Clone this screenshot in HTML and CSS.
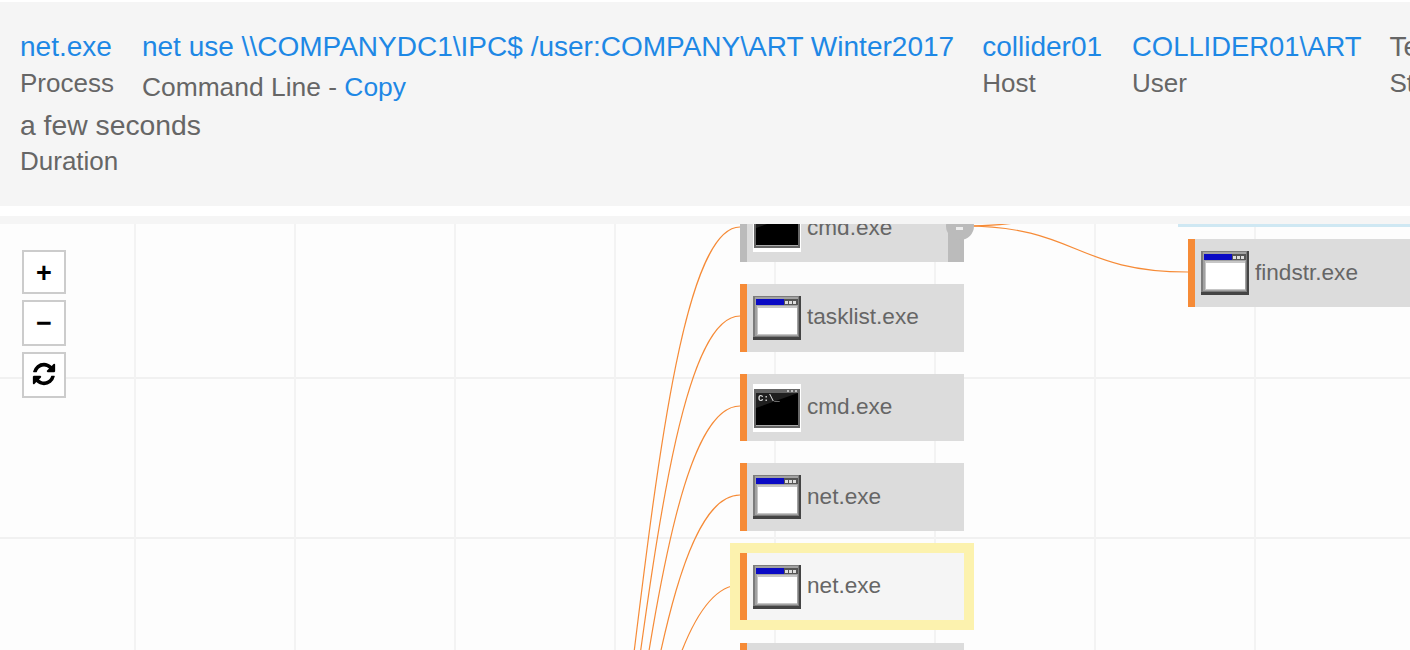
FILE: index.html
```html
<!DOCTYPE html>
<html lang="en">
<head>
    <meta charset="UTF-8">
    <title>Process Tree</title>
    <link rel="stylesheet" href="styles.css">
</head>
<body>
    <svg class="defs" width="0" height="0">
        <symbol id="icon-window" viewBox="0 0 48 48">
            <rect x="0" y="2" width="48" height="44" fill="#444"/>
            <rect x="0" y="2" width="46" height="41" fill="#7c7c7c"/>
            <rect x="2" y="3" width="43" height="39" fill="#a2a2a2"/>
            <rect x="3" y="5" width="42" height="6" fill="#0a0ac4"/>
            <rect x="31" y="5" width="14" height="6" fill="#555"/>
            <rect x="32" y="7" width="3" height="3" fill="#ddd"/>
            <rect x="36" y="7" width="3" height="3" fill="#ddd"/>
            <rect x="40" y="7" width="3" height="3" fill="#ddd"/>
            <rect x="4" y="12" width="40" height="29" fill="#c6c6c6"/>
            <rect x="5" y="14" width="39" height="26" fill="#fff"/>
        </symbol>
        <symbol id="icon-cmd" viewBox="0 0 48 48">
            <rect width="48" height="48" fill="#fff"/>
            <rect x="1" y="5" width="46" height="39" fill="#666"/>
            <rect x="3" y="9" width="42" height="32" fill="#000"/>
            <path d="M3 9h42L3 24z" fill="#1f1f1f"/>
            <rect x="3" y="41" width="42" height="1" fill="#aaa"/>
            <rect x="34" y="6" width="2" height="2" fill="#bbb"/>
            <rect x="38" y="6" width="2" height="2" fill="#bbb"/>
            <rect x="42" y="6" width="2" height="2" fill="#bbb"/>
        </symbol>
    </svg>

    <div class="details">
        <div class="details-row">
            <div class="field">
                <a class="value" href="#">net.exe</a>
                <div class="label">Process</div>
            </div>
            <div class="field">
                <a class="value" href="#">net use \\COMPANYDC1\IPC$ /user:COMPANY\ART Winter2017</a>
                <div class="label label-low">Command Line - <a href="#">Copy</a></div>
            </div>
            <div class="field field-host">
                <a class="value" href="#">collider01</a>
                <div class="label">Host</div>
            </div>
            <div class="field">
                <a class="value value-user" href="#">COLLIDER01\ART</a>
                <div class="label">User</div>
            </div>
            <div class="field">
                <div class="value">Terminated</div>
                <div class="label">Status</div>
            </div>
        </div>
        <div class="details-row">
            <div class="field">
                <div class="value value-duration">a few seconds</div>
                <div class="label">Duration</div>
            </div>
        </div>
    </div>

    <div class="graph">
        <svg class="edges" width="1410" height="426" viewBox="0 224 1410 426">
            <path d="M524 1111C632 1111 632 227 740 227"/>
            <path d="M524 1111C632 1111 632 316 740 316"/>
            <path d="M524 1111C632 1111 632 406 740 406"/>
            <path d="M524 1111C632 1111 632 495 740 495"/>
            <path d="M524 1111C632 1111 632 585 740 585"/>
            <path d="M964 226C1076 226 1076 190 1188 190"/>
            <path d="M964 226C1076 226 1076 272 1188 272"/>
        </svg>

        <div class="halo-blue"></div>

        <div class="node node-parent pos-cmd-top">
            <svg class="icon"><use href="#icon-cmd"/></svg>
            <span>cmd.exe</span>
            <div class="collapse"></div>
            <div class="collapse-knob"><i></i></div>
        </div>
        <div class="node pos-tasklist">
            <svg class="icon"><use href="#icon-window"/></svg>
            <span class="raised">tasklist.exe</span>
        </div>
        <div class="node pos-cmd">
            <svg class="icon" viewBox="0 0 48 48">
                <use href="#icon-cmd" width="48" height="48"/>
                <text class="cmd-prompt" x="5" y="17">C:\_</text>
            </svg>
            <span class="raised">cmd.exe</span>
        </div>
        <div class="node pos-net">
            <svg class="icon"><use href="#icon-window"/></svg>
            <span>net.exe</span>
        </div>
        <div class="node node-selected pos-net-selected">
            <svg class="icon"><use href="#icon-window"/></svg>
            <span class="raised">net.exe</span>
        </div>
        <div class="node pos-next"></div>
        <div class="node pos-findstr">
            <svg class="icon"><use href="#icon-window"/></svg>
            <span>findstr.exe</span>
        </div>

        <div class="zoom-controls">
            <button class="zoom-btn zoom-plus">+</button>
            <button class="zoom-btn">&minus;</button>
            <button class="zoom-btn zoom-reset">
                <svg width="26" height="26" viewBox="0 0 1792 1792"><path d="M1639 1056q0 5-1 7-64 268-268 434.5t-478 166.5q-146 0-282.5-55t-243.5-157l-129 129q-19 19-45 19t-45-19-19-45v-448q0-26 19-45t45-19h448q26 0 45 19t19 45-19 45l-137 137q71 66 161 102t187 36q134 0 250-65t186-179q11-17 53-117 8-23 30-23h192q13 0 22.5 9.5t9.5 22.5zm25-800v448q0 26-19 45t-45 19h-448q-26 0-45-19t-19-45 19-45l138-138q-148-137-349-137-134 0-250 65t-186 179q-11 17-53 117-8 23-30 23h-199q-13 0-22.5-9.5t-9.5-22.5v-7q65-268 270-434.5t480-166.5q146 0 284 55.5t245 156.5l130-129q19-19 45-19t45 19 19 45z"/></svg>
            </button>
        </div>
    </div>
</body>
</html>
```

FILE: styles.css
```css
html, body {
    margin: 0;
    height: 650px;
    overflow: hidden;
}
body {
    background: #fff;
    padding-top: 2px;
    box-sizing: border-box;
    font-family: "Liberation Sans", Arial, sans-serif;
    color: #666;
}
a {
    color: #1e88e5;
    text-decoration: none;
}
.defs {
    position: absolute;
}
.cmd-prompt {
    font-family: "Liberation Mono", monospace;
    font-size: 9px;
    font-weight: bold;
    fill: #ddd;
}

/* details panel */
.details {
    height: 204px;
    box-sizing: border-box;
    padding: 27px 0 0 20px;
    background: #f5f5f5;
    overflow: hidden;
}
.details-row {
    display: flex;
    gap: 28px;
    margin-bottom: 2px;
    white-space: nowrap;
}
.field {
    flex-shrink: 0;
}
.field-host {
    padding-right: 2px;
}
.value, .label {
    display: block;
    line-height: 36px;
}
.value {
    font-size: 28.03px;
}
.value-user {
    font-size: 27.4px;
}
.value-duration {
    font-size: 28.3px;
}
.label {
    font-size: 26px;
}
.label-low {
    margin-top: 4px;
    font-size: 26.4px;
}

/* graph canvas */
.graph {
    position: relative;
    height: 426px;
    margin-top: 10px;
    border-top: 8px solid #f5f5f5;
    overflow: hidden;
    background-color: #fdfdfd;
    background-image:
        linear-gradient(to right, #f3f3f3 2px, transparent 2px),
        linear-gradient(to bottom, #f1f1f1 2px, transparent 2px);
    background-size: 160px 160px;
    background-position: 134px 0, 0 153px;
}
.edges {
    position: absolute;
    left: 0;
    top: 0;
}
.edges path {
    fill: none;
    stroke: #f68b37;
    stroke-width: 1.2;
}
.halo-blue {
    position: absolute;
    left: 1178px;
    right: 0;
    top: 0;
    height: 3px;
    background: #cfe8f3;
}
.node {
    position: absolute;
    display: flex;
    align-items: center;
    gap: 6px;
    box-sizing: border-box;
    width: 224px;
    height: 68px;
    padding-left: 6px;
    border-left: 7px solid #f68b37;
    background: #dcdcdc;
    font-size: 22.6px;
}
.raised {
    margin-bottom: 2px;
}
.icon {
    width: 48px;
    height: 48px;
    flex-shrink: 0;
    filter: blur(0.4px);
}
.node-parent {
    border-left-color: #bbb;
}
.node-selected {
    background: #f5f5f5;
    outline: 10px solid #fcf2ae;
}
.collapse {
    position: absolute;
    right: 0;
    top: 0;
    bottom: 0;
    width: 16px;
    background: #bbb;
}
.collapse-knob {
    position: absolute;
    left: 199px;
    top: 18px;
    width: 28px;
    height: 28px;
    border-radius: 50%;
    background: #bbb;
}
.collapse-knob i {
    position: absolute;
    left: 10px;
    top: 15px;
    width: 7px;
    height: 3px;
    background: #eee;
}
.pos-cmd-top { left: 740px; top: -30px; }
.pos-tasklist { left: 740px; top: 60px; }
.pos-cmd { left: 740px; top: 150px; height: 67px; }
.pos-net { left: 740px; top: 239px; }
.pos-net-selected { left: 740px; top: 329px; height: 67px; }
.pos-next { left: 740px; top: 419px; }
.pos-findstr { left: 1188px; top: 15px; }

/* zoom buttons */
.zoom-controls {
    position: absolute;
    left: 22px;
    top: 26px;
    display: flex;
    flex-direction: column;
    gap: 6px;
}
.zoom-btn {
    display: flex;
    align-items: center;
    justify-content: center;
    box-sizing: border-box;
    width: 44px;
    height: 46px;
    padding: 0;
    border: 2px solid #ccc;
    background: #fff;
    color: #000;
    font-family: "Liberation Sans", Arial, sans-serif;
    font-size: 27px;
    font-weight: bold;
}
.zoom-plus {
    height: 44px;
    padding-top: 2px;
}
.zoom-reset svg {
    margin-bottom: 2px;
}
```
